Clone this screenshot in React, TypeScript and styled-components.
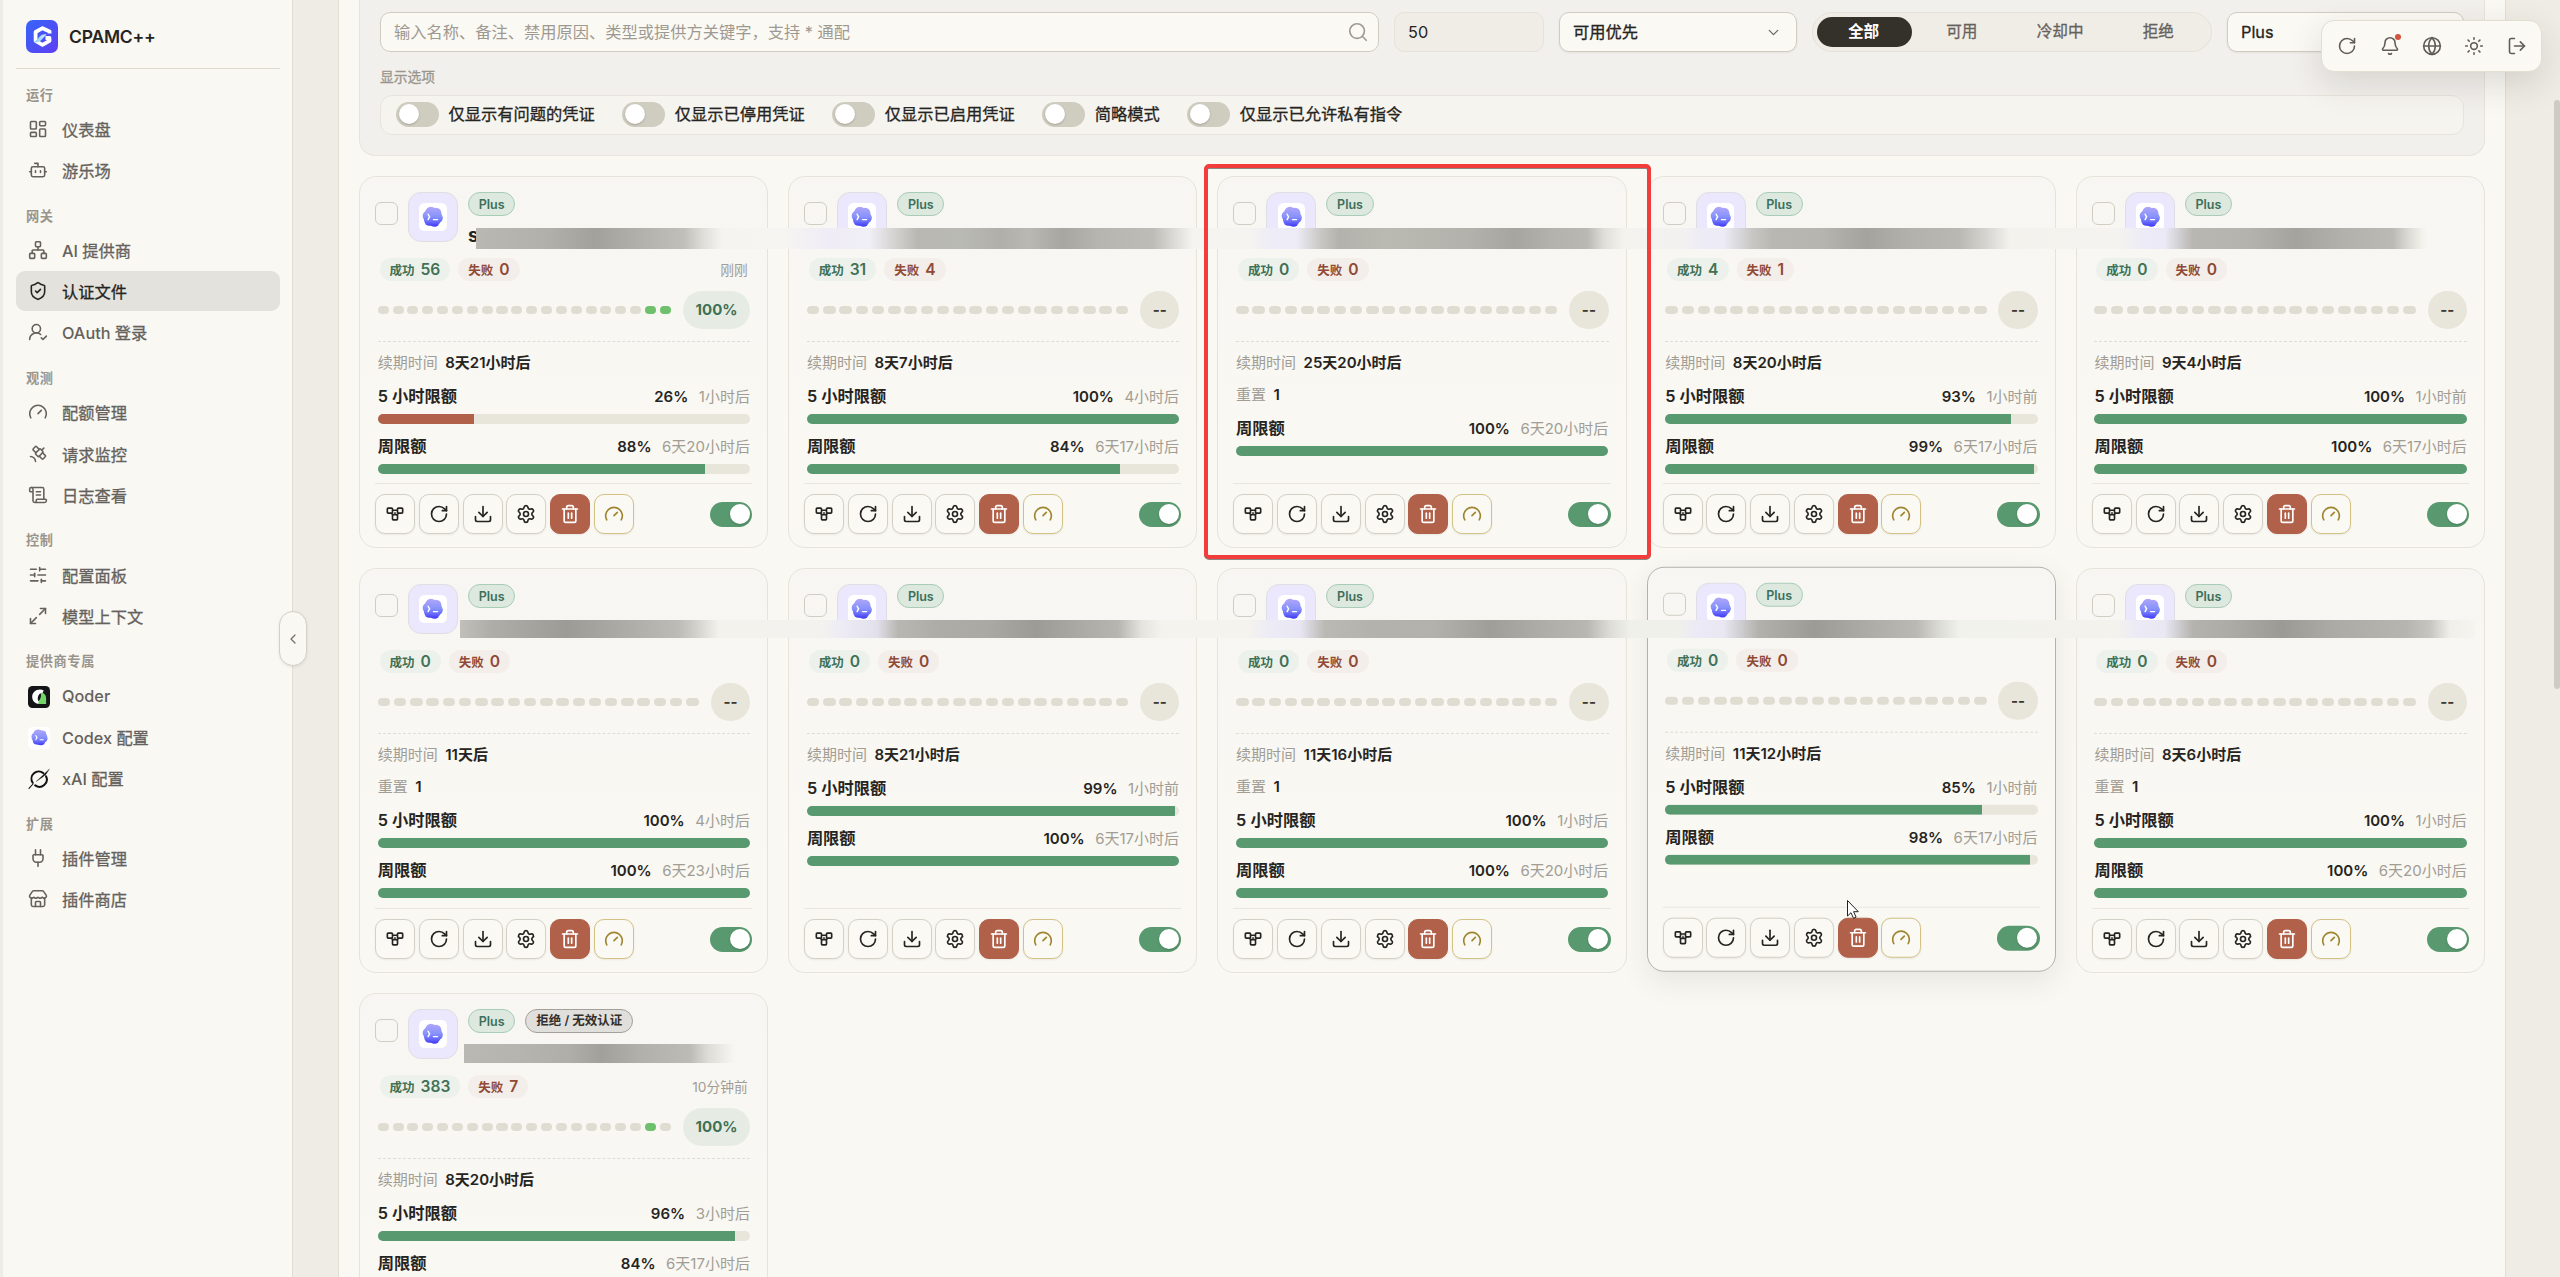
import React from "react";
import styled, { createGlobalStyle, css } from "styled-components";
import {
  LayoutDashboard, Bot, Network, ShieldCheck, UserRoundCheck, Gauge, Satellite, ScrollText,
  SlidersHorizontal, Maximize2, Plug, Store, ChevronLeft, ChevronDown, Search, RotateCw,
  Download, Settings, Trash2, Bell, Globe, Sun, LogOut,
} from "lucide-react";

const c = {
  page: "#f9f8f3",
  gutter: "#efece5",
  line: "#e0ded3",
  soft: "#e6e4dc",
  ink: "#262421",
  mid: "#65615b",
  muted: "#a29d94",
  green: "#58996f",
  red: "#b16149",
  track: "#e8e6da",
};

/* The CJK family has no 500 weight, so a thin stroke stands in for it. */
const cjkMedium = css`
  font-weight: 400;
  -webkit-text-stroke: 0.3px currentColor;
`;

const Global = createGlobalStyle`
  *, *::before, *::after { box-sizing: border-box; }
  html, body { margin: 0; height: 100%; overflow: hidden; }
  body {
    background: ${c.gutter};
    color: ${c.ink};
    font-family: Inter, "Noto Sans CJK SC", sans-serif;
    font-size: 16.25px;
  }
  svg { display: block; flex: none; }
`;

const Shell = styled.div`
  position: relative;
  display: flex;
  height: 1277px;
  overflow: hidden;
`;

/* ---------- sidebar ---------- */

const Sidebar = styled.aside`
  position: relative;
  flex: none;
  width: 293px;
  padding: 20px 12px 0 13px;
  background: ${c.page};
  border-left: 3px solid #eeece8;
  border-right: 1px solid ${c.line};
`;

const Brand = styled.div`
  display: flex;
  align-items: center;
  gap: 11px;
  height: 49px;
  padding: 0 10px 16px;
  border-bottom: 1px solid #dedccf;
  font-size: 17.5px;
  font-weight: 600;
  letter-spacing: -0.2px;
`;

const NavLabel = styled.h2`
  display: flex;
  align-items: flex-end;
  height: 39.85px;
  margin: 0;
  padding: 0 10px 4.3px;
  font-size: 13.2px;
  font-weight: 600;
  letter-spacing: 0.6px;
  line-height: 20px;
  color: #9a958c;
`;

const NavGroup = styled.nav`
  display: flex;
  flex-direction: column;
  gap: 1.25px;
`;

const NavItem = styled.a<{ $active?: boolean }>`
  display: flex;
  align-items: center;
  gap: 14px;
  height: 40px;
  padding: 0 12px;
  border-radius: 9px;
  color: ${(p) => (p.$active ? c.ink : c.mid)};
  background: ${(p) => (p.$active ? "#e4e2dd" : "transparent")};
  ${NavLabel} + & { margin-top: -1.25px; }
`;

const NavText = styled.span<{ $latin: boolean }>`
  ${(p) => (p.$latin ? css`font-weight: 500;` : cjkMedium)}
`;

const IconSlot = styled.span`
  display: grid;
  place-items: center;
  width: 20px;
  height: 20px;
`;

const Handle = styled.button`
  position: absolute;
  top: 611px;
  right: -15px;
  display: grid;
  place-items: center;
  width: 28px;
  height: 55px;
  padding: 0;
  border: 1px solid #d3d1c6;
  border-radius: 14px;
  background: ${c.page};
  color: #77736b;
  box-shadow: 0 1px 3px rgba(60, 55, 40, 0.1);
`;

/* ---------- main ---------- */

const Main = styled.main`
  flex: 1;
  min-width: 0;
  margin: 0 54px 0 45px;
  padding: 0 20px;
  background: ${c.page};
  border: solid ${c.line};
  border-width: 0 1px;
`;

const FilterPanel = styled.section`
  height: 156px;
  padding: 12px 20px 0;
  background: #f2f0ec;
  border: 1px solid ${c.soft};
  border-top: 0;
  border-radius: 0 0 16px 16px;
`;

const FilterRow = styled.div`
  display: grid;
  grid-template-columns: 1fr 150px 238px 400px 237px;
  gap: 15px;
`;

const Field = styled.div<{ $kind?: "muted" | "select"; $placeholder?: boolean }>`
  display: flex;
  align-items: center;
  justify-content: space-between;
  height: 40px;
  padding: 0 ${(p) => (p.$kind === "select" ? 14 : 9)}px 0 13px;
  border: 1px solid ${(p) => (p.$kind === "muted" ? "#e5e2d9" : "#cfcdc2")};
  border-radius: 10px;
  background: ${(p) => (p.$kind === "muted" ? "#f0ede6" : "#faf9f4")};
  color: ${(p) => (p.$placeholder ? "#9f9a91" : c.ink)};
  line-height: 22px;
  ${(p) => p.$kind === "select" && css`box-shadow: 0 1px 2px rgba(60, 55, 40, 0.08);`}
`;

const FieldText = styled.span<{ $medium?: boolean }>`
  margin-top: -1px;
  ${(p) => p.$medium && cjkMedium}
`;

const Segmented = styled.div`
  display: grid;
  grid-template-columns: repeat(4, 1fr);
  gap: 3px;
  height: 40px;
  padding: 4px;
  border: 1px solid #e4e1d8;
  border-radius: 20px;
  background: #f0ede6;
`;

const Segment = styled.button<{ $active?: boolean }>`
  padding: 0 2px 2px 0;
  border: 0;
  border-radius: 15px;
  font: inherit;
  font-size: 15.6px;
  ${(p) => (p.$active ? css`font-weight: 700;` : cjkMedium)}
  line-height: 27px;
  color: ${(p) => (p.$active ? "#fff" : c.mid)};
  background: ${(p) => (p.$active ? "#34302a" : "transparent")};
`;

const OptionsTitle = styled.div`
  height: 42.5px;
  padding-top: 14.5px;
  font-size: 13.75px;
  ${cjkMedium}
  line-height: 20px;
  color: #9b968d;
`;

const Options = styled.div`
  display: flex;
  align-items: center;
  gap: 27.5px;
  height: 40px;
  padding: 0 15px 1px;
  border: 1px solid ${c.soft};
  border-radius: 12px;
  background: #f6f4ef;
`;

const Option = styled.label`
  display: flex;
  align-items: center;
  gap: 10px;
  ${cjkMedium}
  line-height: 22px;
`;

const Switch = styled.span<{ $on?: boolean }>`
  display: flex;
  justify-content: ${(p) => (p.$on ? "flex-end" : "flex-start")};
  width: 42.5px;
  height: 25px;
  padding: 2.5px;
  border-radius: 13px;
  background: ${(p) => (p.$on ? c.green : "#cfcdc0")};
  &::after {
    content: "";
    width: 20px;
    height: 20px;
    border-radius: 50%;
    background: #fff;
    box-shadow: 0 1px 2px rgba(40, 36, 25, 0.25);
  }
`;

/* ---------- cards ---------- */

const CardArea = styled.div`
  position: relative;
  margin-top: 20px;
`;

const CardGrid = styled.div`
  display: grid;
  grid-template-columns: repeat(5, 1fr);
  grid-template-rows: 371.7px 404.7px 404.7px;
  gap: 20.4px 20px;
`;

const Card = styled.article<{ $hover?: boolean }>`
  display: flex;
  flex-direction: column;
  padding: 15px 15px 12.7px 15px;
  border: 1px solid ${(p) => (p.$hover ? "#b3b1a9" : "#e6e4da")};
  border-radius: 17px;
  background: linear-gradient(180deg, #f7f6f2, #f9f8f3 70%);
  ${(p) =>
    p.$hover &&
    css`
      transform: translateY(-1.25px);
      box-shadow: 0 10px 28px rgba(60, 55, 40, 0.09);
    `}
`;

const CardHead = styled.header`
  display: flex;
  align-items: flex-start;
  gap: 10px;
  height: 66px;
  flex: none;
`;

const Checkbox = styled.span`
  flex: none;
  width: 23px;
  height: 22.5px;
  margin-top: 10px;
  border: 1px solid #d0cec2;
  border-radius: 6px;
`;

const Avatar = styled.div`
  display: grid;
  place-items: center;
  flex: none;
  width: 50px;
  height: 50px;
  border: 1px solid #e0dee4;
  border-radius: 13px;
  background: #ebe7fc;
`;

const AvatarTile = styled.span<{ $size: number }>`
  display: grid;
  place-items: center;
  width: ${(p) => p.$size}px;
  height: ${(p) => p.$size}px;
  border-radius: ${(p) => p.$size / 5}px;
  background: #fff;
`;

const Titles = styled.div`
  display: flex;
  flex-direction: column;
  gap: 7.5px;
`;

const Tags = styled.div`
  display: flex;
  gap: 10px;
`;

const Tag = styled.span<{ $neutral?: boolean }>`
  height: 24px;
  padding: 0 ${(p) => (p.$neutral ? 10 : 9.7)}px;
  border: 1px solid ${(p) => (p.$neutral ? "#a3a099" : "#a8ccb7")};
  border-radius: 12px;
  background: ${(p) => (p.$neutral ? "#e1dfdb" : "#dde8de")};
  font-size: 12.5px;
  font-weight: 600;
  line-height: ${(p) => (p.$neutral ? 22.5 : 24)}px;
  color: ${(p) => (p.$neutral ? "#33302b" : "#3c6f5c")};
`;

const Name = styled.div`
  font-size: 18.75px;
  font-weight: 700;
  line-height: 24px;
`;

const Stats = styled.div`
  display: flex;
  align-items: center;
  gap: 8px;
  height: 23px;
  flex: none;
  padding: 0 4.5px;
`;

const Stat = styled.span<{ $bad?: boolean }>`
  display: flex;
  align-items: center;
  gap: 6px;
  height: 23px;
  padding: 0 10px;
  border-radius: 12px;
  font-size: 12.5px;
  font-weight: 600;
  color: ${(p) => (p.$bad ? "#8f4934" : "#3f7156")};
  background: ${(p) => (p.$bad ? "#f4eeea" : "#edf1ec")};
  b { font-size: 15.6px; font-weight: 600; }
`;

const Ago = styled.span`
  margin: -2px 0 0 auto;
  font-size: 13.75px;
  color: ${c.muted};
`;

const Health = styled.div`
  display: flex;
  align-items: center;
  gap: 12px;
  height: 61px;
  flex: none;
  padding-bottom: 3px;
  margin: 0 2px 0 2.7px;
  border-bottom: 1px dashed #dfddd5;
`;

const Dots = styled.div`
  display: flex;
  flex: 1;
  gap: 3.75px;
`;

const Dot = styled.i<{ $on: boolean }>`
  flex: 1;
  height: 8px;
  border-radius: 4px;
  background: ${(p) => (p.$on ? "#6ec06c" : "#dfddd1")};
`;

const Rate = styled.span<{ $ok: boolean }>`
  display: grid;
  place-items: center;
  min-width: 39px;
  height: 38px;
  padding: 0 12.7px;
  border-radius: 19px;
  font-size: 15px;
  font-weight: 700;
  color: ${(p) => (p.$ok ? "#3f7156" : "#3a3731")};
  background: ${(p) => (p.$ok ? "#e6ece4" : c.track)};
`;

const Body = styled.div`
  display: flex;
  flex-direction: column;
  gap: 10px;
  padding: 9.6px 2.3px 0 2.7px;
`;

const Meta = styled.div`
  display: flex;
  gap: 7.5px;
  height: 22.4px;
  font-size: 15px;
  line-height: 22.7px;
  color: ${c.muted};
  b { font-weight: 600; color: ${c.ink}; }
`;

const Quota = styled.div`
  display: flex;
  flex-direction: column;
  gap: 5.6px;
`;

const QuotaLine = styled.div`
  display: flex;
  align-items: flex-start;
  gap: 10.5px;
  height: 24.4px;
  font-size: 15px;
  line-height: 25.5px;
  color: ${c.muted};
  strong { margin-right: auto; font-size: 16.25px; font-weight: 600; color: ${c.ink}; }
  b { font-weight: 600; color: ${c.ink}; }
`;

const Track = styled.div`
  height: 10px;
  overflow: hidden;
  border-radius: 5px;
  background: ${c.track};
`;

const Fill = styled.div<{ $low: boolean }>`
  height: 100%;
  background: ${(p) => (p.$low ? c.red : c.green)};
`;

const Actions = styled.footer`
  display: flex;
  align-items: center;
  gap: 3.75px;
  margin-top: auto;
  padding-top: 10px;
  border-top: 1px solid #e8e6df;
  ${Switch} { margin-left: auto; }
`;

const Action = styled.button<{ $tone?: "danger" | "gold" }>`
  display: grid;
  place-items: center;
  width: 40px;
  height: 40px;
  padding: 0;
  border-radius: 10px;
  border: 1px solid ${(p) => (p.$tone === "danger" ? c.red : p.$tone === "gold" ? "#d3c284" : "#d3d1c6")};
  color: ${(p) => (p.$tone === "danger" ? "#fff" : p.$tone === "gold" ? "#a0852f" : c.ink)};
  background: ${(p) => (p.$tone === "danger" ? c.red : "#faf9f4")};
  box-shadow: 0 1px 2px rgba(60, 55, 40, 0.08);
`;

/* ---------- overlays ---------- */

const Smear = styled.div<{ $x: number; $y: number; $w: number; $h: number; $stops: string }>`
  position: absolute;
  left: ${(p) => p.$x}px;
  top: ${(p) => p.$y}px;
  width: ${(p) => p.$w}px;
  height: ${(p) => p.$h}px;
  background: linear-gradient(90deg, ${(p) => p.$stops});
`;

const Highlight = styled.div`
  position: absolute;
  left: 845px;
  top: -12px;
  width: 447px;
  height: 394.5px;
  border: 4px solid #f33c3c;
  border-radius: 5px;
  filter: drop-shadow(0 1px 0 #8b8985);
`;

const FloatBar = styled.div`
  position: absolute;
  top: 20px;
  right: 18px;
  display: flex;
  align-items: center;
  justify-content: space-around;
  width: 221px;
  height: 52px;
  padding: 0 3px 0 4px;
  border: 1px solid #e1dfd0;
  border-radius: 13px;
  background: #faf9f4;
  color: #605c56;
  box-shadow: 0 12px 34px rgba(50, 46, 32, 0.14);
`;

const FloatButton = styled.span<{ $dot?: boolean }>`
  position: relative;
  display: grid;
  place-items: center;
  ${(p) =>
    p.$dot &&
    css`
      &::after {
        content: "";
        position: absolute;
        top: -2px;
        right: -1px;
        width: 5.5px;
        height: 6px;
        border-radius: 3px;
        background: #d0543f;
      }
    `}
`;

const Scrollbar = styled.div`
  position: absolute;
  top: 100px;
  right: 0;
  width: 6px;
  height: 589px;
  border-radius: 3px;
  background: #cdcbc3;
`;

const Pointer = styled.svg`
  position: absolute;
  left: 1846px;
  top: 899px;
`;

/* ---------- drawings ---------- */

const AppLogo = () => (
  <svg width="32" height="33" viewBox="0 0 32 33">
    <defs>
      <linearGradient id="app" x1="0" y1="0" x2="1" y2="1">
        <stop offset="0" stopColor="#3565f8" />
        <stop offset="1" stopColor="#603df2" />
      </linearGradient>
      <linearGradient id="swoosh" x1="0" y1="0" x2="1" y2="0">
        <stop offset="0" stopColor="#7fd3f7" />
        <stop offset="1" stopColor="#cfe6ff" />
      </linearGradient>
    </defs>
    <rect width="32" height="33" rx="7" fill="url(#app)" />
    <path d="M23.600 13.400v-1.900L16.500 8.200 9.600 12v8.800l6.900 4 7-4v-2.800h-4" fill="none" stroke="#fff" strokeWidth="3.800" strokeLinejoin="round" />
    <path d="M7.500 22c4.500.8 6.500-.6 8.500-2.800l4.500-4.800c-3.600-.6-5.600.6-7.300 2.700-1.300 1.900-3 3.700-5.700 4.900Z" fill="url(#swoosh)" />
  </svg>
);

const CodexMark = ({ size, id }: { size: number; id: string }) => (
  <svg width={size} height={size} viewBox="0 0 24 24">
    <defs>
      <linearGradient id={id} gradientUnits="userSpaceOnUse" x1="12" y1="1" x2="12" y2="23">
        <stop offset="0" stopColor="#b0a6fa" />
        <stop offset="0.5" stopColor="#8792fb" />
        <stop offset="0.75" stopColor="#6a6cfb" />
        <stop offset="1" stopColor="#3f38f7" />
      </linearGradient>
    </defs>
    <g fill={`url(#${id})`}>
      <circle cx="12" cy="12" r="10.300" />
      <circle cx="9.800" cy="6.600" r="5.800" />
      <circle cx="15.800" cy="7.800" r="5.800" />
      <circle cx="6.500" cy="11" r="5.800" />
      <circle cx="17.500" cy="13.200" r="5.800" />
      <circle cx="8.300" cy="16.200" r="5.800" />
      <circle cx="14" cy="17.300" r="5.800" />
    </g>
    <path d="m6.800 9.200 1.700 3-1.700 3M12.800 15.200h4.600" fill="none" stroke="#fff" strokeWidth="1.600" strokeLinecap="round" strokeLinejoin="round" />
  </svg>
);

const QoderMark = () => (
  <svg width="22" height="22" viewBox="0 0 22 22">
    <rect width="22" height="22" rx="4.500" fill="#131516" />
    <path d="M12 3.600c-4.600 0-7.800 3.300-7.800 7.300 0 3.600 2.600 6.500 6.600 6.900l2-6.800 2.900-6.400a8 8 0 0 0-3.700-1Z" fill="#fff" />
    <path d="M13.300 6.800c3 .2 4.800 2.600 4.800 5.400v5.900h-7.300c-1-2.400.4-9.400 2.500-11.300Z" fill="#74d668" />
    <path d="M12.800 7.200c-2.800 1.200-3.700 5-2.600 7.800 2-.8 3.300-4.600 2.600-7.800Z" fill="#131516" />
  </svg>
);

const XaiMark = () => (
  <svg width="22" height="22" viewBox="0 0 22 22" fill="none" stroke="#111" strokeLinecap="round">
    <path d="M4.700 14.800A7.300 7.300 0 0 1 15.500 5.200" strokeWidth="2" />
    <path d="M18 8.200A7.300 7.300 0 0 1 7.200 17.400" strokeWidth="2" />
    <path d="M21.200 1.200 8.200 13.500 14.800 9 18 6.200Z" fill="#111" strokeWidth="0.300" />
    <path d="M1 20.300 5 16" strokeWidth="1.100" />
  </svg>
);

const ModelsIcon = () => (
  <svg width="20" height="20" viewBox="0 0 24 24" fill="none" stroke="currentColor" strokeWidth="2" strokeLinejoin="round">
    <rect x="2.800" y="5" width="6.200" height="6" rx="1" />
    <rect x="15" y="5" width="6.200" height="6" rx="1" />
    <rect x="9" y="12.800" width="6" height="6.200" rx="1" />
    <path d="M9 7.500h6M7.500 11l2.500 2.500M16.500 11 14 13.500" />
    <path d="M12 9.500v3.300" strokeWidth="1.500" />
  </svg>
);

/* ---------- data ---------- */

const li = { size: 20, strokeWidth: 1.9 };

const nav: { label: string; items: [React.ReactNode, string][] }[] = [
  { label: "运行", items: [[<LayoutDashboard {...li} />, "仪表盘"], [<Bot {...li} />, "游乐场"]] },
  { label: "网关", items: [[<Network {...li} />, "AI 提供商"], [<ShieldCheck {...li} />, "认证文件"], [<UserRoundCheck {...li} />, "OAuth 登录"]] },
  { label: "观测", items: [[<Gauge {...li} />, "配额管理"], [<Satellite {...li} />, "请求监控"], [<ScrollText {...li} />, "日志查看"]] },
  { label: "控制", items: [[<SlidersHorizontal {...li} />, "配置面板"], [<Maximize2 {...li} />, "模型上下文"]] },
  {
    label: "提供商专属",
    items: [
      [<QoderMark />, "Qoder"],
      [<AvatarTile $size={22}><CodexMark size={17} id="nav-codex" /></AvatarTile>, "Codex 配置"],
      [<XaiMark />, "xAI 配置"],
    ],
  },
  { label: "扩展", items: [[<Plug {...li} />, "插件管理"], [<Store {...li} />, "插件商店"]] },
];

type CardData = {
  ok: number; bad: number; ago?: string; lit?: number[]; renew: string; reset?: boolean;
  five?: [number, string]; week: [number, string]; name?: string; rejected?: boolean; hover?: boolean;
};

const cards: CardData[] = [
  { ok: 56, bad: 0, ago: "刚刚", lit: [18, 19], renew: "8天21小时后", five: [26, "1小时后"], week: [88, "6天20小时后"], name: "s" },
  { ok: 31, bad: 4, renew: "8天7小时后", five: [100, "4小时后"], week: [84, "6天17小时后"] },
  { ok: 0, bad: 0, renew: "25天20小时后", reset: true, week: [100, "6天20小时后"] },
  { ok: 4, bad: 1, renew: "8天20小时后", five: [93, "1小时前"], week: [99, "6天17小时后"] },
  { ok: 0, bad: 0, renew: "9天4小时后", five: [100, "1小时前"], week: [100, "6天17小时后"] },
  { ok: 0, bad: 0, renew: "11天后", reset: true, five: [100, "4小时后"], week: [100, "6天23小时后"] },
  { ok: 0, bad: 0, renew: "8天21小时后", five: [99, "1小时前"], week: [100, "6天17小时后"] },
  { ok: 0, bad: 0, renew: "11天16小时后", reset: true, five: [100, "1小时后"], week: [100, "6天20小时后"] },
  { ok: 0, bad: 0, renew: "11天12小时后", five: [85, "1小时前"], week: [98, "6天17小时后"], hover: true },
  { ok: 0, bad: 0, renew: "8天6小时后", reset: true, five: [100, "1小时后"], week: [100, "6天20小时后"] },
  { ok: 383, bad: 7, ago: "10分钟前", lit: [18], renew: "8天20小时后", five: [96, "3小时后"], week: [84, "6天17小时后"], rejected: true },
];

/* Redaction bands: colour stops as [page x, colour]. */
type Stop = [number, string];

const toStops = (x0: number, list: Stop[]) =>
  list.map(([x, colour]) => `${colour} ${(x - x0).toFixed(0)}px`).join(", ");

const bandA: Stop[] = [
  [476, "#b9b8b2"], [547, "#b1b0ab"], [595, "#a2a19c"], [650, "#b5b4af"], [684, "#c0bfb9"], [702, "#dddcd7"], [722, "#f6f4f0"],
  [781, "#f7f5f1"], [829, "#efecf6"], [870, "#f0eef6"], [898, "#d0cfcc"], [918, "#b8b7b1"], [960, "#babab5"], [1001, "#b0afa9"],
  [1029, "#b9b8b3"], [1063, "#a7a6a0"], [1098, "#b6b5af"], [1153, "#bdbcb6"], [1173, "#dad9d5"], [1193, "#f6f4f0"],
  [1249, "#f6f4f0"], [1270, "#eeecf6"], [1297, "#edebf6"], [1321, "#c8c7c3"], [1339, "#b3b2ac"], [1387, "#babab3"],
  [1470, "#b2b1ab"], [1515, "#a6a5a0"], [1552, "#b3b2ac"], [1587, "#b9b8b2"], [1604, "#dfded9"], [1624, "#f5f3ee"],
  [1683, "#f3f1f0"], [1704, "#ecebf6"], [1724, "#ecebf6"], [1752, "#c8c7c4"], [1773, "#b8b7b1"], [1821, "#b6b5af"],
  [1866, "#a4a39d"], [1910, "#b2b1ab"], [1959, "#b9b8b2"], [1986, "#d5d4d0"], [2010, "#f4f2ed"], [2117, "#f5f3ef"],
  [2145, "#ecebf7"], [2165, "#eae9f5"], [2193, "#b8b7b1"], [2248, "#b4b3ad"], [2296, "#a4a39d"], [2344, "#b2b1ab"],
  [2393, "#bbbab4"], [2409, "#dcdbd6"], [2424, "#f5f4ef"],
];

const bandB: Stop[] = [
  [460, "#c0bfb9"], [492, "#aeada8"], [567, "#9c9b96"], [616, "#aaa9a4"], [678, "#bcbbb5"], [695, "#d0cfca"], [719, "#f4f2ed"],
  [822, "#f4f2ee"], [839, "#eeecf5"], [877, "#e2e0ea"], [898, "#b8b7b2"], [939, "#adaca6"], [987, "#aaa9a3"], [1036, "#9c9b95"],
  [1084, "#acaba5"], [1118, "#b6b5b0"], [1142, "#e6e4df"], [1162, "#f5f3ee"], [1249, "#f4f3ee"], [1270, "#ecebf6"],
  [1300, "#e8e6f2"], [1325, "#bab9b3"], [1373, "#b3b2ac"], [1435, "#b2b1ab"], [1490, "#9f9e98"], [1539, "#adaca6"],
  [1587, "#b8b7b1"], [1610, "#dddcd7"], [1630, "#f0f0eb"], [1676, "#f0f0ea"], [1697, "#ebeaf6"], [1724, "#e8e7f2"],
  [1759, "#b2b1ab"], [1814, "#9c9b95"], [1869, "#adaca6"], [1917, "#bab9b3"], [1940, "#dcdcd6"], [1960, "#f2f2ec"],
  [2117, "#f3f2ed"], [2138, "#ebeaf6"], [2165, "#e8e7f2"], [2193, "#b4b3ad"], [2234, "#abaaa4"], [2282, "#9b9a94"],
  [2331, "#abaaa4"], [2406, "#b6b5af"], [2430, "#c6c5c0"], [2450, "#f0efea"], [2475, "#f6f4ef"],
];

const bandC: Stop[] = [
  [464, "#b9b8b2"], [520, "#b5b4ae"], [570, "#afaea8"], [601, "#a1a09b"], [640, "#b1b0aa"], [690, "#bcbbb5"],
  [708, "#dddcd7"], [734, "#f7f6f2"],
];

const QuotaRow = ({ label, value, when }: { label: string; value: number; when: string }) => (
  <Quota>
    <QuotaLine>
      <strong>{label}</strong>
      <b>{value}%</b>
      <span>{when}</span>
    </QuotaLine>
    <Track>
      <Fill $low={value < 50} style={{ width: `${value}%` }} />
    </Track>
  </Quota>
);

const NavCaption = ({ text }: { text: string }) => (
  <span>
    {text.split(/([A-Za-z]+ ?)/).filter(Boolean).map((part) => (
      <NavText key={part} $latin={/[A-Za-z]/.test(part)}>{part}</NavText>
    ))}
  </span>
);

const CredentialCard = ({ data, index }: { data: CardData; index: number }) => (
  <Card $hover={data.hover}>
    <CardHead>
      <Checkbox />
      <Avatar>
        <AvatarTile $size={27.5}>
          <CodexMark size={21.5} id={`codex-${index}`} />
        </AvatarTile>
      </Avatar>
      <Titles>
        <Tags>
          <Tag>Plus</Tag>
          {data.rejected && <Tag $neutral>拒绝 / 无效认证</Tag>}
        </Tags>
        {data.name && <Name>{data.name}</Name>}
      </Titles>
    </CardHead>
    <Stats>
      <Stat>成功 <b>{data.ok}</b></Stat>
      <Stat $bad>失败 <b>{data.bad}</b></Stat>
      {data.ago && <Ago>{data.ago}</Ago>}
    </Stats>
    <Health>
      <Dots>
        {Array.from({ length: 20 }, (_, i) => (
          <Dot key={i} $on={!!data.lit?.includes(i)} />
        ))}
      </Dots>
      <Rate $ok={!!data.lit}>{data.lit ? "100%" : "--"}</Rate>
    </Health>
    <Body>
      <Meta>续期时间 <b>{data.renew}</b></Meta>
      {data.reset && <Meta>重置 <b>1</b></Meta>}
      {data.five && <QuotaRow label="5 小时限额" value={data.five[0]} when={data.five[1]} />}
      <QuotaRow label="周限额" value={data.week[0]} when={data.week[1]} />
    </Body>
    <Actions>
      <Action><ModelsIcon /></Action>
      <Action><RotateCw size={20} /></Action>
      <Action><Download size={20} /></Action>
      <Action><Settings size={20} /></Action>
      <Action $tone="danger"><Trash2 size={20} /></Action>
      <Action $tone="gold"><Gauge size={20} strokeWidth={2} /></Action>
      <Switch $on />
    </Actions>
  </Card>
);

export default function App() {
  return (
    <Shell>
      <Global />
      <Sidebar>
        <Brand><AppLogo />CPAMC++</Brand>
        {nav.map((group) => (
          <NavGroup key={group.label}>
            <NavLabel>{group.label}</NavLabel>
            {group.items.map(([icon, text]) => (
              <NavItem key={text} $active={text === "认证文件"}>
                <IconSlot>{icon}</IconSlot>
                <NavCaption text={text} />
              </NavItem>
            ))}
          </NavGroup>
        ))}
        <Handle><ChevronLeft size={16} strokeWidth={2} /></Handle>
      </Sidebar>

      <Main>
        <FilterPanel>
          <FilterRow>
            <Field $placeholder>
              <FieldText>输入名称、备注、禁用原因、类型或提供方关键字，支持 * 通配</FieldText>
              <Search size={22} strokeWidth={1.8} />
            </Field>
            <Field $kind="muted">50</Field>
            <Field $kind="select"><FieldText $medium>可用优先</FieldText><ChevronDown size={17} strokeWidth={1.8} color="#6a665f" /></Field>
            <Segmented>
              <Segment $active>全部</Segment>
              <Segment>可用</Segment>
              <Segment>冷却中</Segment>
              <Segment>拒绝</Segment>
            </Segmented>
            <Field $kind="select"><FieldText $medium>Plus</FieldText></Field>
          </FilterRow>
          <OptionsTitle>显示选项</OptionsTitle>
          <Options>
            {["仅显示有问题的凭证", "仅显示已停用凭证", "仅显示已启用凭证", "简略模式", "仅显示已允许私有指令"].map((t) => (
              <Option key={t}><Switch />{t}</Option>
            ))}
          </Options>
        </FilterPanel>

        <CardArea>
          <CardGrid>
            {cards.map((data, i) => <CredentialCard key={i} data={data} index={i} />)}
          </CardGrid>
          <Smear $x={117} $y={52} $w={1950} $h={21} $stops={toStops(476, bandA)} />
          <Smear $x={101} $y={444} $w={2015} $h={18} $stops={toStops(460, bandB)} />
          <Smear $x={105} $y={868} $w={274} $h={19} $stops={toStops(464, bandC)} />
          <Highlight />
        </CardArea>
      </Main>

      <FloatBar>
        <FloatButton><RotateCw size={20} strokeWidth={1.9} /></FloatButton>
        <FloatButton $dot><Bell size={20} strokeWidth={1.9} /></FloatButton>
        <FloatButton><Globe size={20} strokeWidth={1.9} /></FloatButton>
        <FloatButton><Sun size={20} strokeWidth={1.9} /></FloatButton>
        <FloatButton><LogOut size={20} strokeWidth={1.9} /></FloatButton>
      </FloatBar>
      <Scrollbar />
      <Pointer width="14" height="21" viewBox="0 0 14 21">
        <path d="M1.500 1.500v15.500l3.500-3.300 2.500 5.600 2.600-1.200-2.500-5.400h4.700Z" fill="#fff" stroke="#222" strokeWidth="1" />
      </Pointer>
    </Shell>
  );
}
